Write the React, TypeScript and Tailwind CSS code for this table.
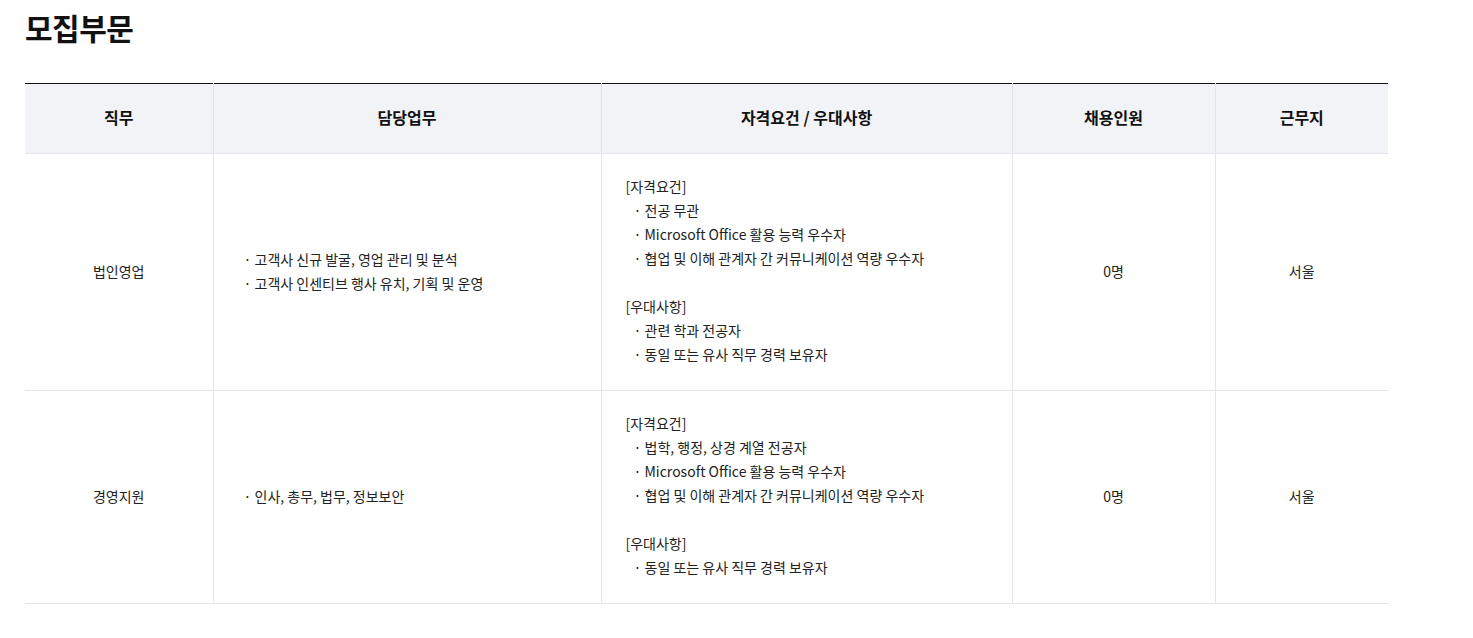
const rows = [
  {
    job: "법인영업",
    duties: ["고객사 신규 발굴, 영업 관리 및 분석", "고객사 인센티브 행사 유치, 기획 및 운영"],
    required: ["전공 무관", "Microsoft Office 활용 능력 우수자", "협업 및 이해 관계자 간 커뮤니케이션 역량 우수자"],
    preferred: ["관련 학과 전공자", "동일 또는 유사 직무 경력 보유자"],
    count: "0명",
    place: "서울",
  },
  {
    job: "경영지원",
    duties: ["인사, 총무, 법무, 정보보안"],
    required: ["법학, 행정, 상경 계열 전공자", "Microsoft Office 활용 능력 우수자", "협업 및 이해 관계자 간 커뮤니케이션 역량 우수자"],
    preferred: ["동일 또는 유사 직무 경력 보유자"],
    count: "0명",
    place: "서울",
  },
]

const heads = ["직무", "담당업무", "자격요건 / 우대사항", "채용인원", "근무지"]

export default function App() {
  return (
    <div
      className="bg-white min-h-screen pl-[25px] pr-[85px] pt-[7px] text-[#222]"
      style={{ fontFamily: '"Noto Sans CJK KR", "Noto Sans", sans-serif' }}
    >
      <h2 className="text-[30px] font-bold leading-[40px] text-[#111] tracking-[-0.5px]">모집부문</h2>

      <table className="mt-[36px] w-full border-collapse table-fixed text-[14px] leading-[24px]">
        <colgroup>
          <col className="w-[188px]" />
          <col className="w-[388px]" />
          <col className="w-[411px]" />
          <col className="w-[203px]" />
          <col />
        </colgroup>
        <thead>
          <tr className="border-t border-[#111] bg-[#f2f3f7]">
            {heads.map((h, i) => (
              <th
                key={h}
                className={`h-[70px] pb-[3px] text-[16px] font-bold text-[#111] border-b border-[#e3e5eb] ${
                  i > 0 ? "border-l" : ""
                } border-[#e3e5eb]`}
              >
                {h}
              </th>
            ))}
          </tr>
        </thead>
        <tbody>
          {rows.map((r) => (
            <tr key={r.job} className="border-b border-[#e3e5eb]">
              <td className="text-center align-middle pb-[3px]">{r.job}</td>
              <td className="border-l border-[#e3e5eb] pl-[30px] align-middle pb-[3px]">
                {r.duties.map((d) => (
                  <div key={d}>· {d}</div>
                ))}
              </td>
              <td className="border-l border-[#e3e5eb] px-[24px] pt-[20px] pb-[24px] align-middle">
                <div>[자격요건]</div>
                {r.required.map((d) => (
                  <div key={d} className="pl-[8px]">· {d}</div>
                ))}
                <div className="h-[24px]" />
                <div>[우대사항]</div>
                {r.preferred.map((d) => (
                  <div key={d} className="pl-[8px]">· {d}</div>
                ))}
              </td>
              <td className="border-l border-[#e3e5eb] text-center align-middle pb-[3px]">{r.count}</td>
              <td className="border-l border-[#e3e5eb] text-center align-middle pb-[3px]">{r.place}</td>
            </tr>
          ))}
        </tbody>
      </table>
    </div>
  )
}
